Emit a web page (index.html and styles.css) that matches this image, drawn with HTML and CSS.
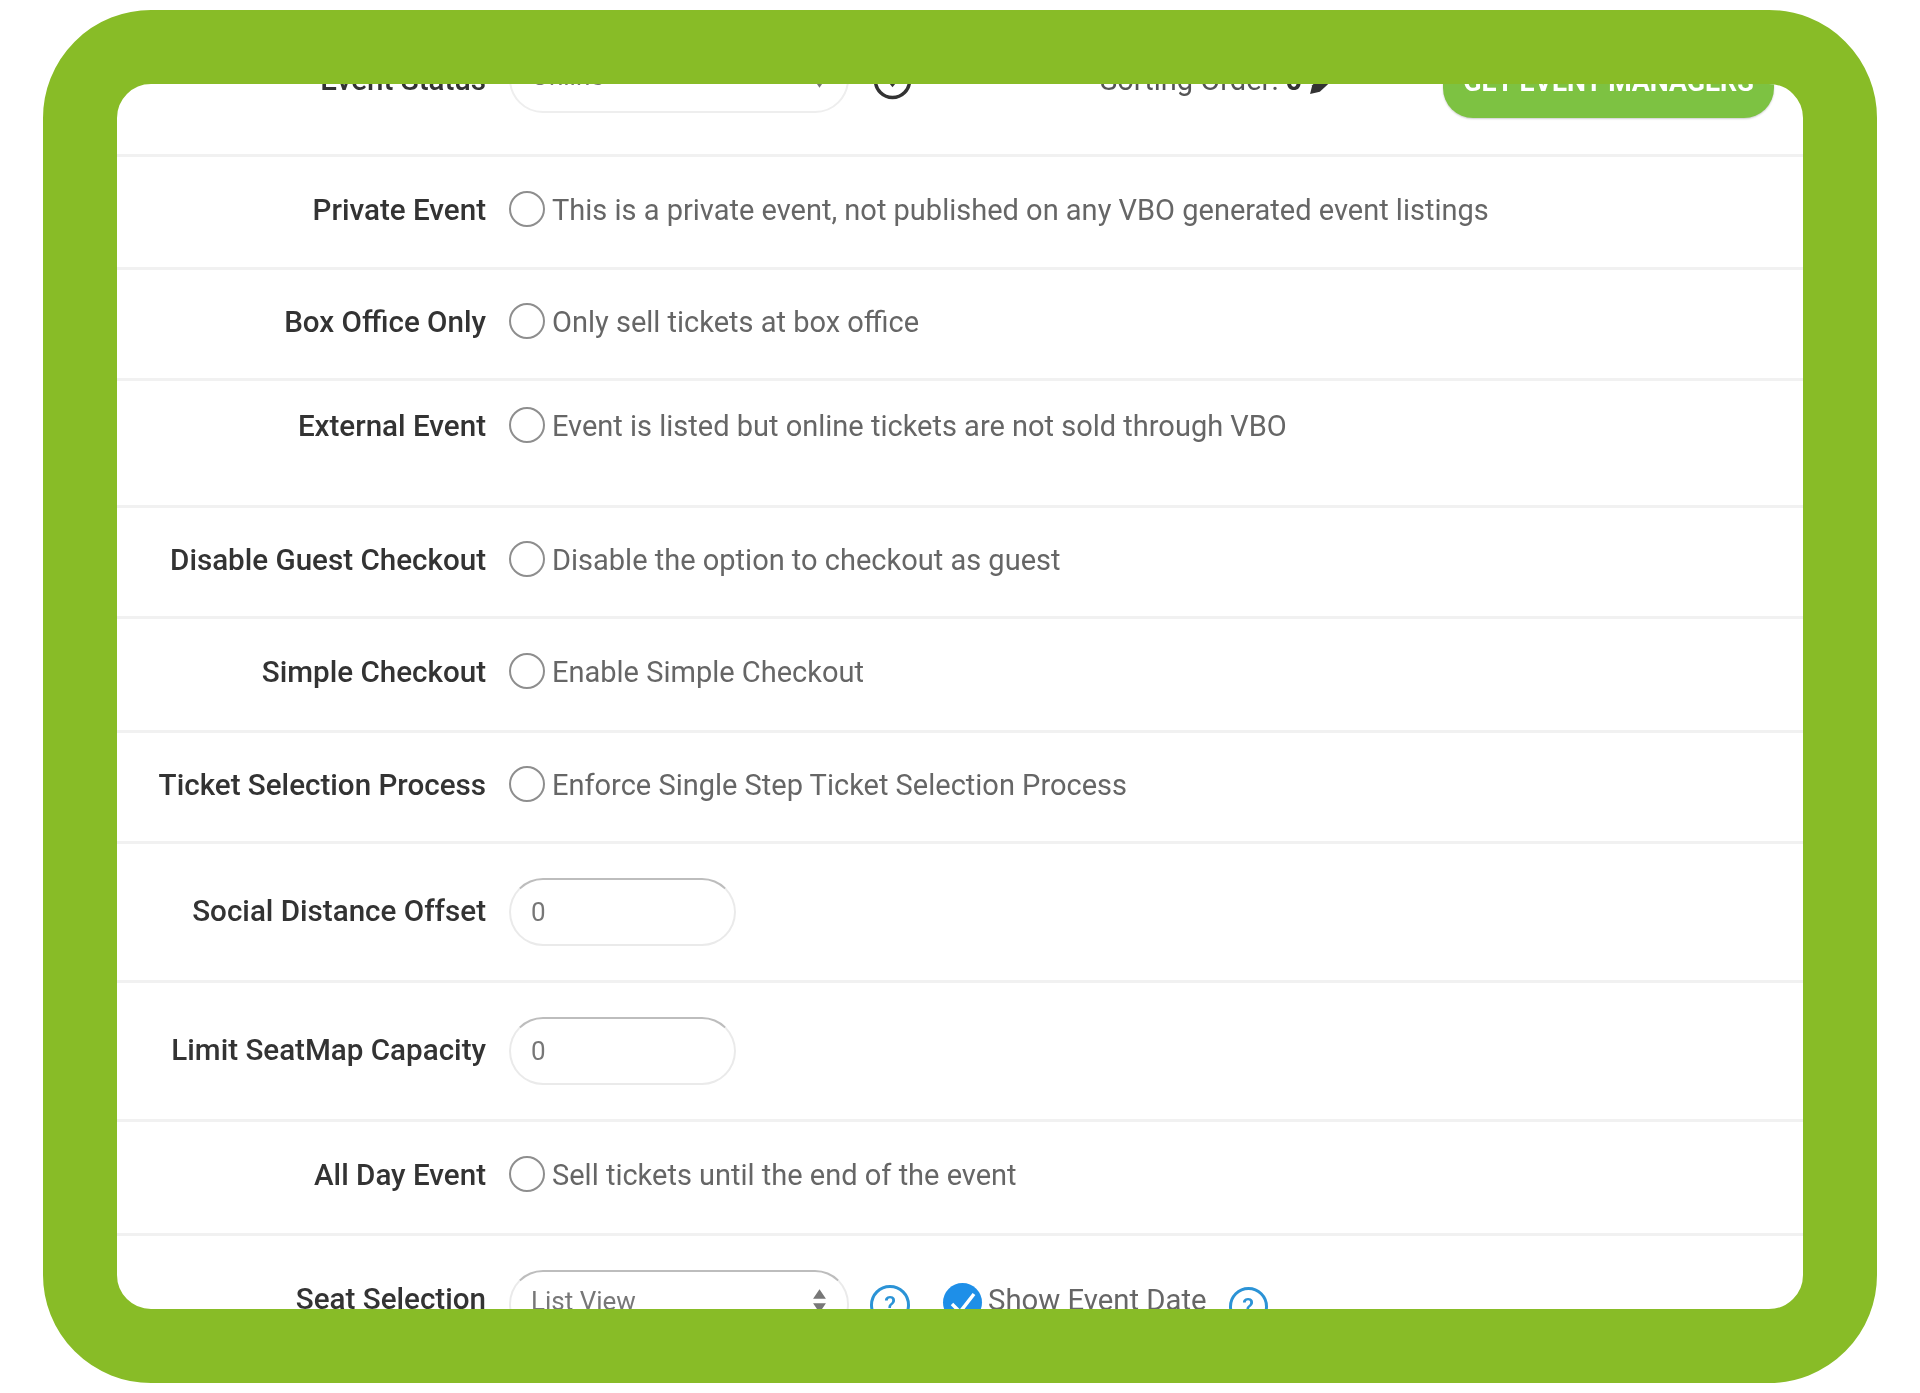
FILE: index.html
```html
<!DOCTYPE html>
<html lang="en">
<head>
<meta charset="utf-8">
<title>Event settings</title>
<link rel="stylesheet" href="styles.css">
</head>
<body>
<main class="frame">
  <div class="form">
    <div class="row row-status">
      <div class="label">Event Status</div>
      <div class="control">
        <div class="select select-status"><span>Online</span>
          <svg class="spin" viewBox="0 0 14 24"><path d="M7 1l6 9H1zM7 23l6-9H1z"/></svg>
        </div>
        <svg class="circle-down" viewBox="0 0 40 40"><circle cx="20" cy="20" r="17.5"/><path class="chev" d="M12 17h16l-8 10z"/></svg>
        <div class="sorting">Sorting Order: <b>0</b>
          <svg class="pencil" viewBox="0 0 24 24"><path d="M1 23l2-8L16 2l7 7-13 12z"/></svg>
        </div>
        <button class="manager" type="button">GET EVENT MANAGERS</button>
      </div>
    </div>
    <div class="row pad h113"><div class="label">Private Event</div><div class="control"><span class="radio"></span><span class="desc">This is a private event, not published on any VBO generated event listings</span></div></div>
    <div class="row pad h111"><div class="label">Box Office Only</div><div class="control"><span class="radio"></span><span class="desc">Only sell tickets at box office</span></div></div>
    <div class="row h127 top"><div class="label">External Event</div><div class="control"><span class="radio"></span><span class="desc">Event is listed but online tickets are not sold through VBO</span></div></div>
    <div class="row pad h111"><div class="label">Disable Guest Checkout</div><div class="control"><span class="radio"></span><span class="desc">Disable the option to checkout as guest</span></div></div>
    <div class="row pad h114"><div class="label">Simple Checkout</div><div class="control"><span class="radio"></span><span class="desc">Enable Simple Checkout</span></div></div>
    <div class="row pad h111"><div class="label">Ticket Selection Process</div><div class="control"><span class="radio"></span><span class="desc">Enforce Single Step Ticket Selection Process</span></div></div>
    <div class="row num h139"><div class="label">Social Distance Offset</div><div class="control"><div class="input">0</div></div></div>
    <div class="row num h139"><div class="label">Limit SeatMap Capacity</div><div class="control"><div class="input">0</div></div></div>
    <div class="row pad h114"><div class="label">All Day Event</div><div class="control"><span class="radio"></span><span class="desc">Sell tickets until the end of the event</span></div></div>
    <div class="row row-seat">
      <div class="label">Seat Selection</div>
      <div class="control">
        <div class="select"><span>List View</span>
          <svg class="spin" viewBox="0 0 14 24"><path d="M7 1l6 9H1zM7 23l6-9H1z"/></svg>
        </div>
        <span class="help">?</span>
        <span class="check"><svg viewBox="0 0 39 39"><path d="M9 21l8 8 14-18"/></svg></span>
        <span class="desc show">Show Event Date</span>
        <span class="help help-b">?</span>
      </div>
    </div>
  </div>
</main>
</body>
</html>
```
FILE: styles.css
```css
* { box-sizing: border-box; }
html, body { margin: 0; height: 100%; background: #fff; }
body { padding: 10px 43px; font-family: Roboto, "Liberation Sans", sans-serif; }
.frame { height: 1373px; border: 74px solid #88bc27; border-radius: 108px; background: #fff; overflow: hidden; }
.form { height: 100%; overflow: hidden; filter: blur(.6px); }
.row { display: flex; align-items: center; border-bottom: 3px solid #f1f1f1; }
.pad { padding-bottom: 7px; }
.pad .label { margin-top: 2px; }
.num .label { margin-top: -2px; }
.h111 { height: 111px; }
.h113 { height: 113px; }
.h114 { height: 114px; }
.h127 { height: 127px; }
.h139 { height: 139px; }
.top { align-items: flex-start; padding-top: 25px; }
.top .label { margin-top: 2px; }
.label { width: 369px; flex: none; text-align: right; font-size: 29.6px; font-weight: 500; color: #333; line-height: 36px; }
.control { display: flex; align-items: center; margin-left: 23px; flex: 1; min-width: 0; }
.radio { width: 36px; height: 36px; flex: none; border: 2px solid #8e8e8e; border-radius: 50%; background: #fff; }
.desc { margin: 2px 0 0 7px; font-size: 29px; color: #666; line-height: 36px; white-space: nowrap; }
.input, .select { height: 68px; border: 2px solid #eaeaea; border-top-color: #bdbdbd; border-radius: 34px; font-size: 26px; color: #777; display: flex; align-items: center; padding-left: 20px; flex: none; }
.input { width: 227px; }
.select { width: 340px; justify-content: space-between; padding: 0 20px 6px; }
.spin { width: 15px; height: 26px; fill: #777; }

/* clipped top row: everything hangs from the bottom edge */
.row-status { height: 73px; align-items: flex-end; padding-bottom: 36px; }
.row-status .label { margin-bottom: 20px; }
.row-status .control { align-items: flex-end; }
.select-status { margin-bottom: 5px; border-color: #eeeeee; }
.circle-down { width: 39px; height: 39px; margin: 0 0 18px 24px; fill: none; stroke: #333; stroke-width: 3.5; flex: none; }
.chev { fill: #333; stroke: none; }
.sorting { margin: 0 0 20px 188px; width: 343px; flex: none; line-height: 36px; font-size: 29px; color: #555; white-space: nowrap; display: flex; align-items: center; gap: 7px; }
.sorting b { color: #333; }
.pencil { width: 26px; height: 28px; margin-top: 4px; fill: #333; }
.manager { width: 331px; height: 72px; flex: none; border: 0; border-radius: 30px; background: #7dc242; color: #fff; font: 700 26.8px Roboto, "Liberation Sans", sans-serif; box-shadow: 0 1px 2px rgba(0,0,0,.2); padding: 0; }

/* clipped bottom row */
.row-seat { height: 200px; border: 0; align-items: flex-start; padding-top: 34px; }
.row-seat .label { margin-top: 11px; }
.row-seat .control { align-items: flex-start; }
.help { width: 40px; height: 40px; flex: none; margin: 15px 0 0 21px; border: 3px solid #2b93d6; border-radius: 50%; color: #2b93d6; font-size: 24px; font-weight: 500; display: flex; align-items: center; justify-content: center; }
.check { width: 39px; height: 39px; flex: none; margin: 13px 0 0 33px; border-radius: 50%; background: #1e8fe8; }
.check svg { display: block; width: 39px; height: 39px; fill: none; stroke: #fff; stroke-width: 3.5; }
.show { margin: 12px 0 0 6px; font-size: 29.3px; }
.help-b { width: 39px; height: 39px; margin: 17px 0 0 22px; }
```
